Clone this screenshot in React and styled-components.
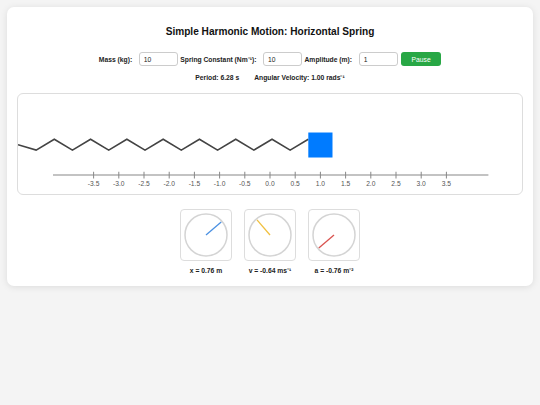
import React from 'react';
import styled, { createGlobalStyle } from 'styled-components';

const GlobalStyle = createGlobalStyle`
  body {
    margin: 0;
    background: #f4f4f4;
    font-family: 'Liberation Sans', Arial, sans-serif;
  }
`;

const Page = styled.div`
  padding: 7px;
`;

const Card = styled.div`
  background: #fff;
  border-radius: 7px;
  box-shadow: 0 1px 7px rgba(0, 0, 0, 0.1);
  padding: 19px 10px 11px;
`;

const Title = styled.h2`
  margin: 0;
  text-align: center;
  font-size: 10.1px;
  line-height: 12px;
  font-weight: bold;
  color: #111;
`;

const Controls = styled.div`
  display: flex;
  justify-content: center;
  align-items: center;
  gap: 2.5px;
  margin-top: 14px;
`;

const Label = styled.label`
  font-size: 6.75px;
  font-weight: bold;
  color: #222;
  margin-right: 4px;
`;

const Input = styled.input`
  box-sizing: border-box;
  width: 39px;
  height: 14px;
  border: 1px solid #ccc;
  border-radius: 3px;
  padding: 0 4px;
  font-family: inherit;
  font-size: 6.75px;
  color: #222;
  outline: none;
`;

const Button = styled.button`
  box-sizing: border-box;
  width: 40px;
  height: 14px;
  margin-left: 1px;
  border: none;
  border-radius: 3px;
  background: #28a745;
  color: #fff;
  font-family: inherit;
  font-size: 6.75px;
  padding: 0;
`;

const Info = styled.div`
  display: flex;
  justify-content: center;
  gap: 15px;
  margin-top: 8px;
  font-size: 6.75px;
  font-weight: bold;
  color: #222;
  line-height: 8px;
`;

const SimBox = styled.div`
  margin-top: 11px;
  border: 1px solid #ddd;
  border-radius: 6px;
  height: 100px;
  overflow: hidden;
`;

const Dials = styled.div`
  display: flex;
  justify-content: center;
  gap: 12px;
  margin-top: 14px;
`;

const DialCol = styled.div`
  display: flex;
  flex-direction: column;
  align-items: center;
  width: 52px;
  gap: 6px;
`;

const DialBox = styled.div`
  box-sizing: border-box;
  width: 52px;
  height: 52px;
  border: 1px solid #ddd;
  border-radius: 4px;
`;

const DialLabel = styled.div`
  font-size: 6.75px;
  font-weight: bold;
  color: #222;
  white-space: nowrap;
  line-height: 8px;
`;

const pos = 0.76;
const theta = Math.acos(pos);

function Spring() {
  const end = 375 + pos * 75;
  const n = 16;
  const pts = [[0, 75]];
  for (let i = 1; i <= n; i++) {
    pts.push([(i * end) / n, i % 2 ? 83 : 67]);
  }
  const ticks = [];
  for (let v = -3.5; v <= 3.51; v += 0.5) ticks.push(v);
  return (
    <svg width="100%" height="100" viewBox="0 0 750 148" preserveAspectRatio="none">
      <polyline points={pts.map((p) => p.join(',')).join(' ')} fill="none" stroke="#444" strokeWidth="2.4" />
      <rect x={end} y="57" width="36" height="37" fill="#007bff" />
      <line x1="52" y1="120" x2="700" y2="120" stroke="#888" strokeWidth="1.5" />
      {ticks.map((v) => {
        const x = 375 + v * 75;
        return (
          <g key={v}>
            <line x1={x} y1="115" x2={x} y2="125" stroke="#888" strokeWidth="1.5" />
            <text x={x} y="136" textAnchor="middle" fontSize="10" fill="#555" fontFamily="'Liberation Sans', Arial, sans-serif">
              {v.toFixed(1)}
            </text>
          </g>
        );
      })}
    </svg>
  );
}

function Dial({ angle, color, label }) {
  const x2 = 25 + 20 * Math.cos(angle);
  const y2 = 25 - 20 * Math.sin(angle);
  return (
    <DialCol>
      <DialBox>
        <svg width="50" height="50" viewBox="0 0 50 50">
          <circle cx="25" cy="25" r="21" fill="none" stroke="#d4d4d4" strokeWidth="1.5" />
          <line x1="25" y1="25" x2={x2} y2={y2} stroke={color} strokeWidth="1.3" />
        </svg>
      </DialBox>
      <DialLabel>{label}</DialLabel>
    </DialCol>
  );
}

export default function App() {
  return (
    <>
      <GlobalStyle />
      <Page>
        <Card>
          <Title>Simple Harmonic Motion: Horizontal Spring</Title>
          <Controls>
            <Label>Mass (kg):</Label>
            <Input defaultValue="10" />
            <Label>Spring Constant (Nm⁻¹):</Label>
            <Input defaultValue="10" />
            <Label>Amplitude (m):</Label>
            <Input defaultValue="1" />
            <Button>Pause</Button>
          </Controls>
          <Info>
            <span>Period: 6.28 s</span>
            <span>Angular Velocity: 1.00 rads⁻¹</span>
          </Info>
          <SimBox>
            <Spring />
          </SimBox>
          <Dials>
            <Dial angle={theta} color="#4a90e2" label="x = 0.76 m" />
            <Dial angle={theta + Math.PI / 2} color="#f0c040" label="v = -0.64 ms⁻¹" />
            <Dial angle={theta + Math.PI} color="#d9534f" label="a = -0.76 m⁻²" />
          </Dials>
        </Card>
      </Page>
    </>
  );
}
